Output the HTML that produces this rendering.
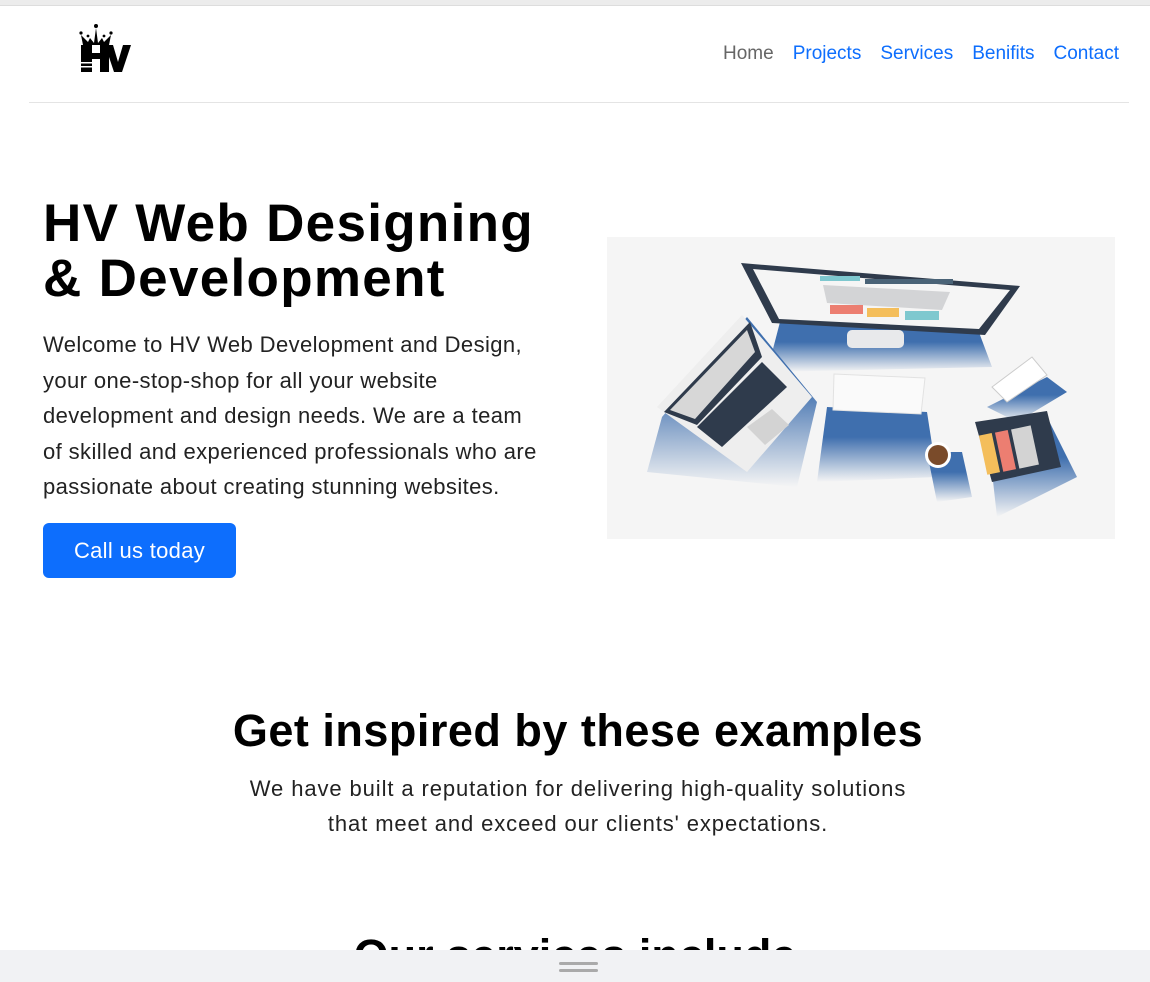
<!DOCTYPE html>
<html><head><meta charset="utf-8"><style>
*{margin:0;padding:0;box-sizing:border-box}
body{width:1150px;height:982px;overflow:hidden;background:#fff;font-family:"Liberation Sans",sans-serif;color:#000;position:relative}
.topbar{position:absolute;left:0;top:0;width:1150px;height:6px;background:#ececec;border-bottom:1px solid #ddd}
.nav{position:absolute;top:43px;right:31px;font-size:19px;display:flex;gap:19px}
.nav a{color:#0d6efd;text-decoration:none}
.nav a.h{color:#666}
.line{position:absolute;left:29px;top:102px;width:1100px;height:1px;background:#e4e4e4}
h1{position:absolute;left:43px;top:196px;font-size:53px;line-height:55px;font-weight:bold;letter-spacing:1.3px}
.p{position:absolute;left:43px;top:327px;width:560px;font-size:22px;line-height:35.5px;color:#222;letter-spacing:0.4px;white-space:nowrap}
.btn{position:absolute;left:43px;top:523px;width:193px;height:55px;background:#0d6efd;border-radius:6px;color:#fff;font-size:22px;text-align:center;line-height:55px;letter-spacing:0.3px}
.ill{position:absolute;left:607px;top:237px;width:508px;height:302px;background:#f5f5f5}
h2{position:absolute;left:0;width:1156px;top:705px;text-align:center;font-size:45px;font-weight:bold;letter-spacing:0.5px}
.sub{position:absolute;left:0;width:1156px;top:772px;text-align:center;font-size:22px;line-height:34.5px;color:#222;letter-spacing:0.9px}
h3{position:absolute;left:0;width:1150px;top:930px;text-align:center;font-size:45px;font-weight:bold}
.bot{position:absolute;left:0;top:950px;width:1150px;height:32px;background:#f1f2f4}
.hd{position:absolute;left:559px;width:39px;height:3px;background:#aaa;border-radius:2px}
</style></head><body>
<div class="topbar"></div>
<svg style="position:absolute;left:78px;top:22px" width="56" height="52" viewBox="0 0 56 52">
<g fill="#000"><circle cx="18" cy="4" r="2"/><circle cx="3" cy="11" r="1.6"/><circle cx="10" cy="14" r="1.4"/><circle cx="26" cy="14" r="1.4"/><circle cx="33" cy="11" r="1.6"/>
<path d="M5 23 L3 13 L10 20 L12 16 L16 21 L18 6 L20 21 L24 16 L26 20 L33 13 L31 23Z"/>
<rect x="3" y="23" width="11" height="27"/><rect x="14" y="31" width="10" height="6"/><rect x="22" y="23" width="9" height="27"/>
<path d="M27 23 L35 23 L40 40 L45 23 L53 23 L44 50 L36 50Z"/></g>
<rect x="3" y="40" width="11" height="1.5" fill="#fff"/><rect x="3" y="44" width="11" height="1.5" fill="#fff"/></svg>
<div class="nav"><a class="h">Home</a><a>Projects</a><a>Services</a><a>Benifits</a><a>Contact</a></div>
<div class="line"></div>
<h1>HV Web Designing<br>&amp; Development</h1>
<div class="p">Welcome to HV Web Development and Design,<br>your one-stop-shop for all your website<br>development and design needs. We are a team<br>of skilled and experienced professionals who are<br>passionate about creating stunning websites.</div>
<div class="btn">Call us today</div>
<div class="ill"><svg width="508" height="302" viewBox="0 0 508 302">
<defs><linearGradient id="g" x1="0" y1="0" x2="0" y2="1"><stop offset="0.4" stop-color="#3f6fae"/><stop offset="1" stop-color="#f5f5f5"/></linearGradient></defs>
<path d="M173 85 L370 90 L385 130 L160 135Z" fill="url(#g)"/>
<path d="M55 180 L140 80 L210 165 L190 250 L40 235Z" fill="url(#g)"/>
<path d="M220 170 L320 175 L330 240 L210 245Z" fill="url(#g)"/>
<path d="M320 215 L355 215 L365 260 L330 265Z" fill="url(#g)"/>
<path d="M380 190 L440 180 L470 240 L390 280Z" fill="url(#g)"/>
<path d="M380 170 L440 140 L460 155 L410 185Z" fill="url(#g)"/>
<path d="M134 26 L413 49 L378 98 L165 86Z" fill="#2f3b4c"/>
<path d="M146 32 L403 53 L372 92 L172 82Z" fill="#f5f5f5"/>
<rect x="213" y="39" width="40" height="5" fill="#7ec8cf"/><rect x="258" y="42" width="88" height="5" fill="#4a6377"/>
<path d="M216 48 L343 55 L335 73 L220 66Z" fill="#d3d4d6"/>
<rect x="223" y="68" width="33" height="9" fill="#ec7e71"/><rect x="260" y="71" width="32" height="9" fill="#f4be5b"/><rect x="298" y="74" width="34" height="9" fill="#7ec8cf"/>
<rect x="240" y="93" width="57" height="18" rx="5" fill="#e8e9eb"/>
<path d="M227 137 L318 141 L314 177 L226 173Z" fill="#fafafa" stroke="#e2e2e2"/>
<path d="M50 170 L135 78 L205 160 L140 235Z" fill="#eeeeee"/>
<path d="M57 175 L143 85 L155 120 L90 188Z" fill="#2f3b4c"/>
<path d="M63 173 L140 93 L148 115 L88 182Z" fill="#d7d7d7"/>
<path d="M90 190 L155 125 L180 150 L115 210Z" fill="#2f3b4c"/>
<path d="M140 190 L165 172 L182 188 L158 208Z" fill="#d3d3d3"/>
<path d="M368 185 L440 174 L454 230 L385 245Z" fill="#2f3b4c"/>
<rect x="376" y="197" width="13" height="40" fill="#f4be5b" transform="rotate(-12 382 217)"/><rect x="392" y="194" width="13" height="40" fill="#ec7e71" transform="rotate(-12 398 214)"/><rect x="408" y="190" width="20" height="40" fill="#d3d3d3" transform="rotate(-12 418 210)"/>
<path d="M385 150 L425 120 L440 138 L400 165Z" fill="#fff" stroke="#ccc"/>
<circle cx="331" cy="218" r="13" fill="#fff"/><circle cx="331" cy="218" r="10" fill="#7a4b2a"/>
</svg></div>
<h2>Get inspired by these examples</h2>
<div class="sub">We have built a reputation for delivering high-quality solutions<br>that meet and exceed our clients' expectations.</div>
<h3>Our services include</h3>
<div class="bot"><div class="hd" style="top:12px"></div><div class="hd" style="top:19px"></div></div>
</body></html>
